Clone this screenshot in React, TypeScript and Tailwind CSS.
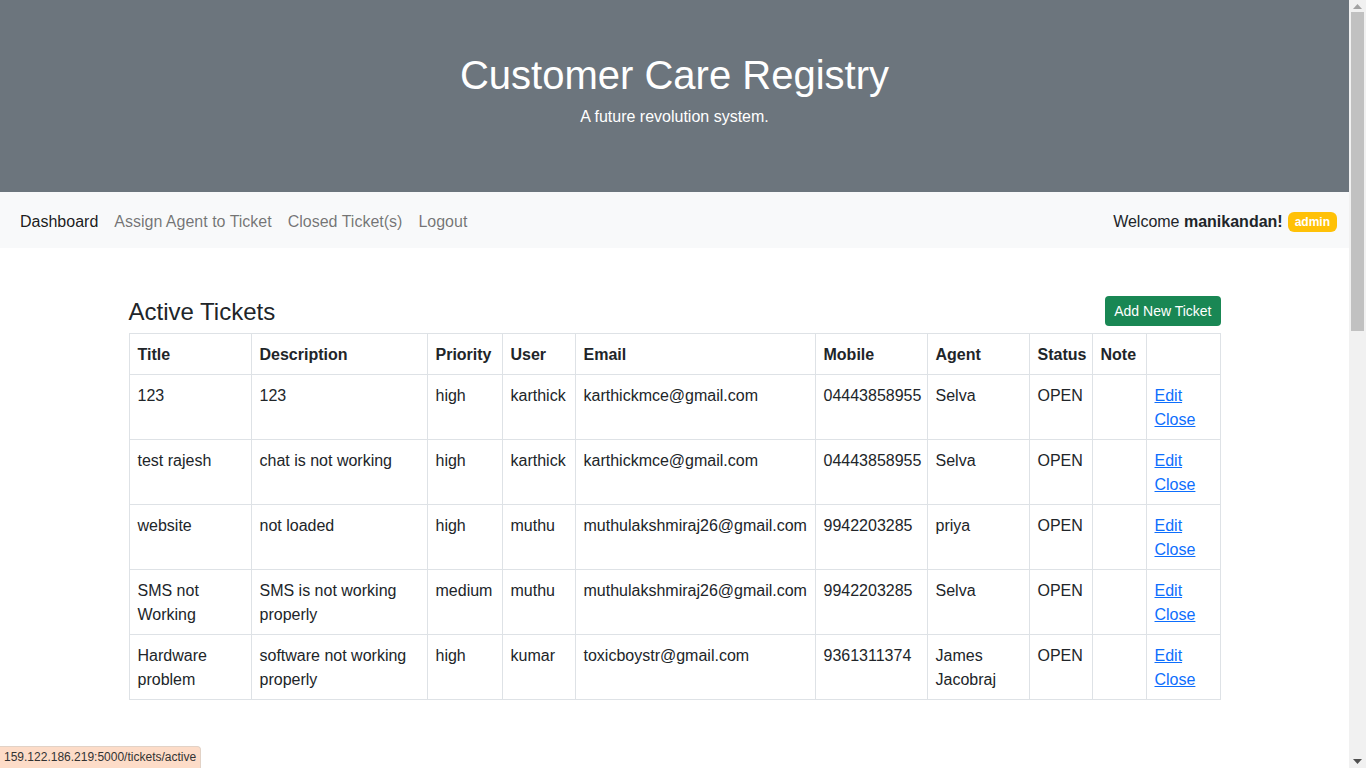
type Ticket = {
  title: string;
  description: string;
  priority: string;
  user: string;
  email: string;
  mobile: string;
  agent: string;
  status: string;
  note?: string;
};

const tickets: Ticket[] = [
  { title: "123", description: "123", priority: "high", user: "karthick", email: "karthickmce@gmail.com", mobile: "04443858955", agent: "Selva", status: "OPEN" },
  { title: "test rajesh", description: "chat is not working", priority: "high", user: "karthick", email: "karthickmce@gmail.com", mobile: "04443858955", agent: "Selva", status: "OPEN" },
  { title: "website", description: "not loaded", priority: "high", user: "muthu", email: "muthulakshmiraj26@gmail.com", mobile: "9942203285", agent: "priya", status: "OPEN" },
  { title: "SMS not Working", description: "SMS is not working properly", priority: "medium", user: "muthu", email: "muthulakshmiraj26@gmail.com", mobile: "9942203285", agent: "Selva", status: "OPEN" },
  { title: "Hardware problem", description: "software not working properly", priority: "high", user: "kumar", email: "toxicboystr@gmail.com", mobile: "9361311374", agent: "James Jacobraj", status: "OPEN" },
];

const cell = "border border-[#dee2e6] px-2 pt-[9px] pb-[7px] align-top leading-6";

function Scrollbar() {
  return (
    <div className="flex w-[17px] shrink-0 flex-col bg-[#f1f1f1]">
      <div className="flex h-[12px] items-center justify-center">
        <svg width="9" height="5" viewBox="0 0 9 5">
          <path d="M4.5 0L9 5H0z" fill="#a3a3a3" />
        </svg>
      </div>
      <div className="mx-[2px] h-[319px] bg-[#c1c1c1]" />
      <div className="flex-1" />
      <div className="flex h-[14px] items-center justify-center">
        <svg width="9" height="5" viewBox="0 0 9 5">
          <path d="M0 0H9L4.5 5z" fill="#505050" />
        </svg>
      </div>
    </div>
  );
}

export default function App() {
  return (
    <div className="relative flex h-[768px] w-full overflow-hidden bg-white font-['Liberation_Sans',Arial,sans-serif] text-base text-[#212529]">
      <div className="min-w-0 flex-1">
        <header className="bg-[#6c757d] px-12 pt-[51px] pb-[47px] text-center text-white">
          <h1 className="mb-[6px] text-[40px] font-medium leading-[48px]">Customer Care Registry</h1>
          <p className="mb-4 leading-6">A future revolution system.</p>
        </header>

        <nav className="flex h-14 items-center justify-between bg-[#f8f9fa] px-3 pt-[4px]">
          <div className="flex items-center">
            <a className="px-2 leading-6 text-black/90">Dashboard</a>
            <a className="px-2 leading-6 text-black/[0.55]">Assign Agent to Ticket</a>
            <a className="px-2 leading-6 text-black/[0.55]">Closed Ticket(s)</a>
            <a className="px-2 leading-6 text-black/[0.55]">Logout</a>
          </div>
          <div className="flex items-center leading-6">
            <span>
              Welcome <b className="font-bold">manikandan!</b>
            </span>
            <span className="ml-[5px] rounded-[6px] bg-[#ffc107] px-[7px] py-[3px] text-[12px] font-bold leading-[14px] text-white">
              admin
            </span>
          </div>
        </nav>

        <main className="mx-auto w-[1092px] pt-12">
          <div className="mb-[7px] flex items-center justify-between">
            <h3 className="text-[24px] font-medium leading-[29px]">Active Tickets</h3>
            <button className="h-[30px] rounded-[4px] bg-[#198754] px-[9px] pt-[1px] text-[14px] leading-[21px] text-white">
              Add New Ticket
            </button>
          </div>

          <table className="w-[1091px] table-fixed border-collapse">
            <colgroup>
              <col className="w-[122px]" />
              <col className="w-[176px]" />
              <col className="w-[75px]" />
              <col className="w-[73px]" />
              <col className="w-[240px]" />
              <col className="w-[112px]" />
              <col className="w-[102px]" />
              <col className="w-[63px]" />
              <col className="w-[54px]" />
              <col className="w-[74px]" />
            </colgroup>
            <thead>
              <tr className="text-left font-bold">
                {["Title", "Description", "Priority", "User", "Email", "Mobile", "Agent", "Status", "Note", ""].map((h, i) => (
                  <th key={i} className={`${cell} whitespace-nowrap`}>
                    {h}
                  </th>
                ))}
              </tr>
            </thead>
            <tbody>
              {tickets.map((t, i) => (
                <tr key={i}>
                  <td className={cell}>{t.title}</td>
                  <td className={cell}>{t.description}</td>
                  <td className={cell}>{t.priority}</td>
                  <td className={cell}>{t.user}</td>
                  <td className={`${cell} whitespace-nowrap`}>{t.email}</td>
                  <td className={cell}>{t.mobile}</td>
                  <td className={cell}>{t.agent}</td>
                  <td className={cell}>{t.status}</td>
                  <td className={cell}>{t.note}</td>
                  <td className={cell}>
                    <a className="text-[#0d6efd] underline">Edit</a>
                    <br />
                    <a className="text-[#0d6efd] underline">Close</a>
                  </td>
                </tr>
              ))}
            </tbody>
          </table>
        </main>
      </div>

      <Scrollbar />

      <div className="absolute bottom-0 left-0 rounded-tr-[4px] border-t border-r border-[#e2d2c6] bg-[#fddcc8] px-[4px] py-[3px] text-[12px] leading-[15px] text-[#333]">
        159.122.186.219:5000/tickets/active
      </div>
    </div>
  );
}
